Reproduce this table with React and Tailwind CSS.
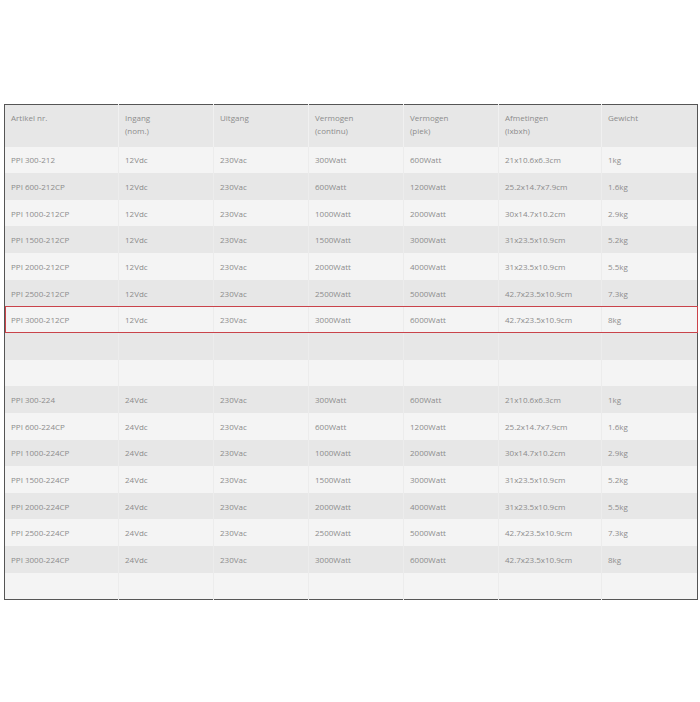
const head = [
  ['Artikel nr.', ''],
  ['Ingang', '(nom.)'],
  ['Uitgang', ''],
  ['Vermogen', '(continu)'],
  ['Vermogen', '(piek)'],
  ['Afmetingen', '(lxbxh)'],
  ['Gewicht', ''],
]

const sizes = [
  ['300', '300', '600', '21x10.6x6.3cm', '1kg', ''],
  ['600', '600', '1200', '25.2x14.7x7.9cm', '1.6kg', 'CP'],
  ['1000', '1000', '2000', '30x14.7x10.2cm', '2.9kg', 'CP'],
  ['1500', '1500', '3000', '31x23.5x10.9cm', '5.2kg', 'CP'],
  ['2000', '2000', '4000', '31x23.5x10.9cm', '5.5kg', 'CP'],
  ['2500', '2500', '5000', '42.7x23.5x10.9cm', '7.3kg', 'CP'],
  ['3000', '3000', '6000', '42.7x23.5x10.9cm', '8kg', 'CP'],
]

const make = (v) =>
  sizes.map(([m, c, p, dim, kg, cp]) => [
    `PPI ${m}-2${v}${cp}`,
    `${v}Vdc`,
    '230Vac',
    `${c}Watt`,
    `${p}Watt`,
    dim,
    kg,
  ])

const empty = ['', '', '', '', '', '', '']
const rows = [...make(12), empty, empty, ...make(24), empty]

const widths = ['w-[114px]', 'w-[95px]', 'w-[95px]', 'w-[95px]', 'w-[95px]', 'w-[103px]', 'w-[96px]']

export default function App() {
  return (
    <div className="min-h-[702px] bg-white pt-[104px] pl-[4px]" style={{ fontFamily: '"Open Sans", sans-serif' }}>
      <table className="w-[693px] table-fixed border-collapse border-[1.5px] border-[#555555] text-[8px] text-[#8c8c8c]">
        <thead>
          <tr className="h-[42px] bg-[#e7e7e7]">
            {head.map(([a, b], i) => (
              <th
                key={i}
                className={`${widths[i]} border-l border-[#f0f0f0] first:border-l-0 px-[6px] pt-[6px] text-left align-top font-normal leading-[13px]`}
              >
                <div>{a}</div>
                {b && <div>{b}</div>}
              </th>
            ))}
          </tr>
        </thead>
        <tbody>
          {rows.map((r, i) => (
            <tr
              key={i}
              className={`h-[26.65px] ${i % 2 === 0 ? 'bg-[#f4f4f4]' : 'bg-[#e7e7e7]'} ${
                i === 6 ? 'outline outline-1 -outline-offset-1 outline-[#c9434a]' : ''
              }`}
            >
              {r.map((c, j) => (
                <td key={j} className="border-l border-[#ececec] first:border-l-0 px-[6px] align-middle leading-[13px]">
                  {c}
                </td>
              ))}
            </tr>
          ))}
        </tbody>
      </table>
    </div>
  )
}
